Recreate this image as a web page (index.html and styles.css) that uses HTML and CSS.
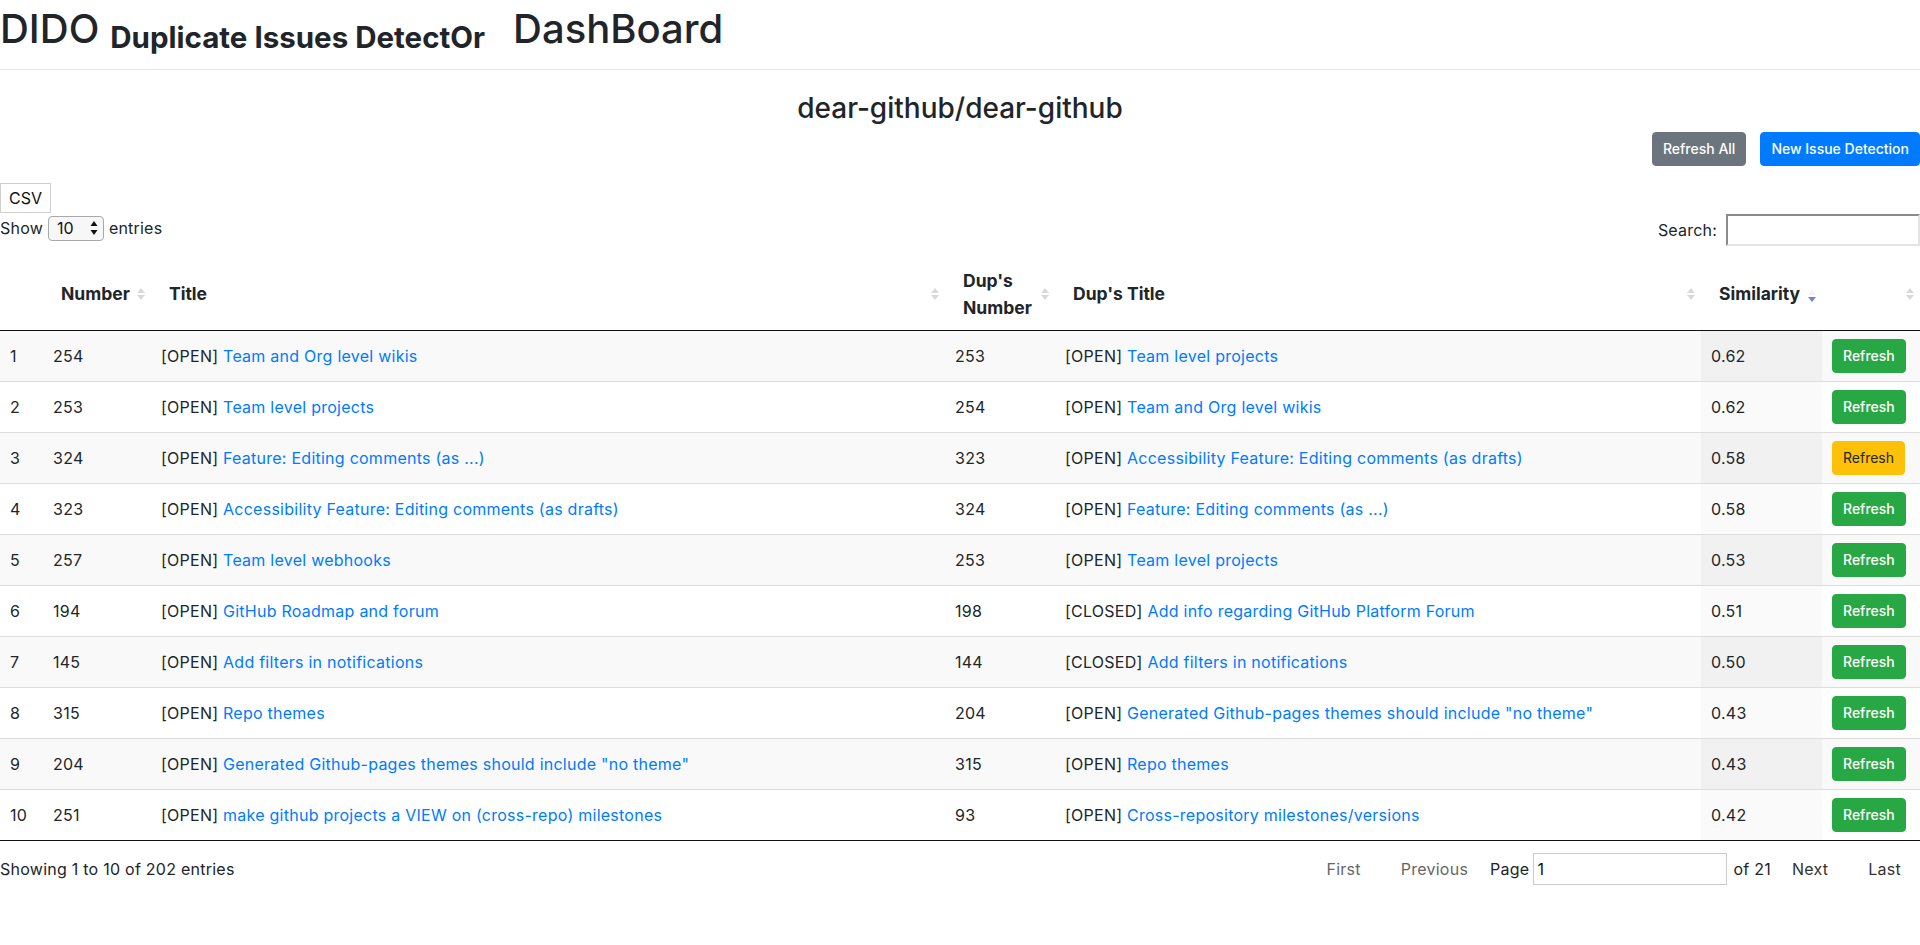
FILE: index.html
```html
<!DOCTYPE html>
<html lang="en">
<head>
<meta charset="utf-8">
<title>DIDO DashBoard</title>
<link rel="stylesheet" href="styles.css">
</head>
<body>
<div class="topbar"><span class="brand">DIDO</span><span class="brand-sub">Duplicate Issues DetectOr</span><span class="brand-dash">DashBoard</span></div>
<hr class="rule">
<h3 class="repo">dear-github/dear-github</h3>
<div class="actions">
  <button class="btn btn-secondary">Refresh All</button>
  <button class="btn btn-primary">New Issue Detection</button>
</div>
<div class="dt-wrapper">
  <div class="dt-buttons"><button class="csv">CSV</button></div>
  <div class="dt-top">
    <label class="dt-length">Show <span class="select-box"><select class="select"><option>10</option><option>25</option><option>50</option><option>100</option></select><svg class="select-arrows" width="8" height="16" viewBox="0 0 8 16"><path d="M4 1 L7.5 6 H0.5 Z M4 15 L7.5 10 H0.5 Z" fill="#111"/></svg></span> entries</label>
    <label class="dt-filter">Search: <input class="search" type="search"></label>
  </div>
  <table class="dt">
    <colgroup>
      <col class="c-idx"><col class="c-num"><col class="c-title"><col class="c-dnum"><col class="c-dtitle"><col class="c-sim"><col class="c-act">
    </colgroup>
    <thead>
      <tr>
        <th></th>
        <th class="sortable">Number<span class="sort"></span></th>
        <th class="sortable">Title<span class="sort"></span></th>
        <th class="sortable">Dup's Number<span class="sort"></span></th>
        <th class="sortable">Dup's Title<span class="sort"></span></th>
        <th class="sortable">Similarity<span class="sort sort-desc"></span></th>
        <th class="sortable"><span class="sort"></span></th>
      </tr>
    </thead>
    <tbody>
      <tr class="odd"><td>1</td><td>254</td><td>[OPEN] <a href="#">Team and Org level wikis</a></td><td>253</td><td>[OPEN] <a href="#">Team level projects</a></td><td class="sorted">0.62</td><td><button class="rbtn rbtn-green">Refresh</button></td></tr>
      <tr class="even"><td>2</td><td>253</td><td>[OPEN] <a href="#">Team level projects</a></td><td>254</td><td>[OPEN] <a href="#">Team and Org level wikis</a></td><td class="sorted">0.62</td><td><button class="rbtn rbtn-green">Refresh</button></td></tr>
      <tr class="odd"><td>3</td><td>324</td><td>[OPEN] <a href="#">Feature: Editing comments (as ...)</a></td><td>323</td><td>[OPEN] <a href="#">Accessibility Feature: Editing comments (as drafts)</a></td><td class="sorted">0.58</td><td><button class="rbtn rbtn-yellow">Refresh</button></td></tr>
      <tr class="even"><td>4</td><td>323</td><td>[OPEN] <a href="#">Accessibility Feature: Editing comments (as drafts)</a></td><td>324</td><td>[OPEN] <a href="#">Feature: Editing comments (as ...)</a></td><td class="sorted">0.58</td><td><button class="rbtn rbtn-green">Refresh</button></td></tr>
      <tr class="odd"><td>5</td><td>257</td><td>[OPEN] <a href="#">Team level webhooks</a></td><td>253</td><td>[OPEN] <a href="#">Team level projects</a></td><td class="sorted">0.53</td><td><button class="rbtn rbtn-green">Refresh</button></td></tr>
      <tr class="even"><td>6</td><td>194</td><td>[OPEN] <a href="#">GitHub Roadmap and forum</a></td><td>198</td><td>[CLOSED] <a href="#">Add info regarding GitHub Platform Forum</a></td><td class="sorted">0.51</td><td><button class="rbtn rbtn-green">Refresh</button></td></tr>
      <tr class="odd"><td>7</td><td>145</td><td>[OPEN] <a href="#">Add filters in notifications</a></td><td>144</td><td>[CLOSED] <a href="#">Add filters in notifications</a></td><td class="sorted">0.50</td><td><button class="rbtn rbtn-green">Refresh</button></td></tr>
      <tr class="even"><td>8</td><td>315</td><td>[OPEN] <a href="#">Repo themes</a></td><td>204</td><td>[OPEN] <a href="#">Generated Github-pages themes should include "no theme"</a></td><td class="sorted">0.43</td><td><button class="rbtn rbtn-green">Refresh</button></td></tr>
      <tr class="odd"><td>9</td><td>204</td><td>[OPEN] <a href="#">Generated Github-pages themes should include "no theme"</a></td><td>315</td><td>[OPEN] <a href="#">Repo themes</a></td><td class="sorted">0.43</td><td><button class="rbtn rbtn-green">Refresh</button></td></tr>
      <tr class="even"><td>10</td><td>251</td><td>[OPEN] <a href="#">make github projects a VIEW on (cross-repo) milestones</a></td><td>93</td><td>[OPEN] <a href="#">Cross-repository milestones/versions</a></td><td class="sorted">0.42</td><td><button class="rbtn rbtn-green">Refresh</button></td></tr>
    </tbody>
  </table>
  <div class="dt-bottom">
    <div class="dt-info">Showing 1 to 10 of 202 entries</div>
    <div class="dt-paginate">
      <span class="pg-btn disabled">First</span>
      <span class="pg-btn disabled">Previous</span>
      <span class="pg-of">Page <input class="pg-input" type="text" value="1"> of 21</span>
      <span class="pg-btn">Next</span>
      <span class="pg-btn">Last</span>
    </div>
  </div>
</div>
</body>
</html>
```

FILE: styles.css
```css
* { box-sizing: border-box; }
body {
  margin: 0;
  font-family: Inter, "Helvetica Neue", Arial, sans-serif;
  font-size: 16px;
  line-height: 1.5;
  color: #212529;
  background: #fff;
}
.topbar {
  padding-top: 5px;
  line-height: 48px;
  height: 53px;
  white-space: nowrap;
}
.brand {
  font-size: 40px;
  font-weight: 500;
}
.brand-sub {
  font-size: 29.5px;
  line-height: 1;
  font-weight: 700;
  margin-left: 11px;
  vertical-align: -5px;
}
.brand-dash {
  font-size: 40px;
  font-weight: 500;
  margin-left: 28px;
}
.rule {
  margin: 16px 0 22px;
  border: 0;
  border-top: 1px solid rgba(0,0,0,.1);
}
.repo {
  margin: 0 0 4px;
  text-align: center;
  font-size: 28px;
  line-height: 1.2;
  font-weight: 500;
}
.actions {
  display: flex;
  justify-content: flex-end;
  gap: 14px;
  margin-top: 6px;
}
.btn {
  font-family: inherit;
  font-size: 14px;
  line-height: 20px;
  padding: 6px 10px;
  border: 1px solid transparent;
  border-radius: 4px;
  color: #fff;
  font-weight: 500;
}
.btn-secondary { background: #6c757d; border-color: #6c757d; }
.btn-primary { background: #007bff; border-color: #007bff; }

.dt-buttons { margin-top: 17px; }
.csv {
  font-family: inherit;
  font-size: 16px;
  line-height: 20px;
  padding: 4px 8px;
  background: #fff;
  border: 1px solid #cfcfcf;
  border-radius: 0;
  color: #111;
}
.dt-top {
  display: flex;
  justify-content: space-between;
  align-items: flex-start;
}
.dt-length {
  display: flex;
  align-items: center;
  gap: 5px;
  margin-top: 3px;
  letter-spacing: 0.2px;
}
.select-box {
  display: inline-flex;
  align-items: center;
  width: 56px;
  height: 25px;
  border: 1px solid #a9a9a9;
  border-radius: 4px;
  background: #f7f7f7;
  padding-right: 5px;
}
.select {
  appearance: none;
  -webkit-appearance: none;
  border: 0;
  background: transparent;
  font-family: inherit;
  font-size: 16px;
  color: #111;
  padding: 0 0 0 8px;
  flex: 1;
  min-width: 0;
  outline: none;
}
.select-arrows { flex: none; }
.dt-filter {
  display: flex;
  align-items: center;
  gap: 9px;
  margin-top: 1px;
  letter-spacing: 0.2px;
}
.search {
  width: 194px;
  height: 32px;
  border-width: 2px;
  border-style: solid;
  border-color: #8b8b8b #e3e3e3 #e3e3e3 #8b8b8b;
  font-family: inherit;
  font-size: 16px;
  padding: 2px 4px;
}

table.dt {
  width: 100%;
  table-layout: fixed;
  border-collapse: collapse;
  margin-top: 12px;
  border-bottom: 1px solid #111;
}
.c-idx { width: 43px; }
.c-num { width: 108px; }
.c-title { width: 794px; }
.c-dnum { width: 110px; }
.c-dtitle { width: 646px; }
.c-sim { width: 121px; }
.c-act { width: 98px; }

.dt th {
  position: relative;
  text-align: left;
  font-size: 17.5px;
  line-height: 27px;
  font-weight: 700;
  padding: 9px 18px;
  vertical-align: middle;
  border-bottom: 1px solid #111;
}
.sort {
  position: absolute;
  right: 6px;
  top: 50%;
  width: 8px;
  height: 12px;
  margin-top: -6px;
}
.sort::before, .sort::after {
  content: "";
  position: absolute;
  left: 0;
  border-left: 4px solid transparent;
  border-right: 4px solid transparent;
}
.sort::before {
  top: 0;
  border-bottom: 5px solid #d9d9d9;
}
.sort::after {
  bottom: 0;
  border-top: 5px solid #d9d9d9;
}
.sort-desc { margin-top: -4px; }
.sort-desc::before { border-bottom-color: #f1f1f6; }
.sort-desc::after { border-top-color: #7384d1; }

.dt td {
  padding: 8px 10px;
  vertical-align: middle;
  height: 51px;
  letter-spacing: 0.25px;
}
.dt tbody tr + tr td { border-top: 1px solid #ddd; }
.dt tr.odd td { background: #f9f9f9; }
.dt tr.odd td.sorted { background: #f1f1f1; }
.dt tr.even td.sorted { background: #fafafa; }
.dt a { color: #007bff; text-decoration: none; }

.rbtn {
  font-family: inherit;
  font-size: 14px;
  line-height: 20px;
  padding: 6px 10px;
  border: 1px solid transparent;
  border-radius: 4px;
  font-weight: 500;
  letter-spacing: 0;
}
.rbtn-green { background: #28a745; border-color: #28a745; color: #fff; }
.rbtn-yellow { background: #ffc107; border-color: #ffc107; color: #212529; font-weight: 400; }

.dt-bottom {
  display: flex;
  justify-content: space-between;
  align-items: center;
  padding-top: 12px;
  letter-spacing: 0.25px;
}
.dt-paginate {
  display: flex;
  align-items: center;
}
.pg-btn {
  padding: 4px 19px;
  margin-left: 2px;
  color: #333;
}
.pg-btn.disabled { color: #666; }
.pg-of {
  display: flex;
  align-items: center;
  gap: 4px;
  margin: 0 0 0 3px;
}
.pg-of .pg-input { margin-right: 2px; }
.pg-input {
  width: 194px;
  height: 32px;
  border: 1px solid #cbcbcb;
  font-family: inherit;
  font-size: 16px;
  padding: 0 3px;
  color: #111;
}
```
